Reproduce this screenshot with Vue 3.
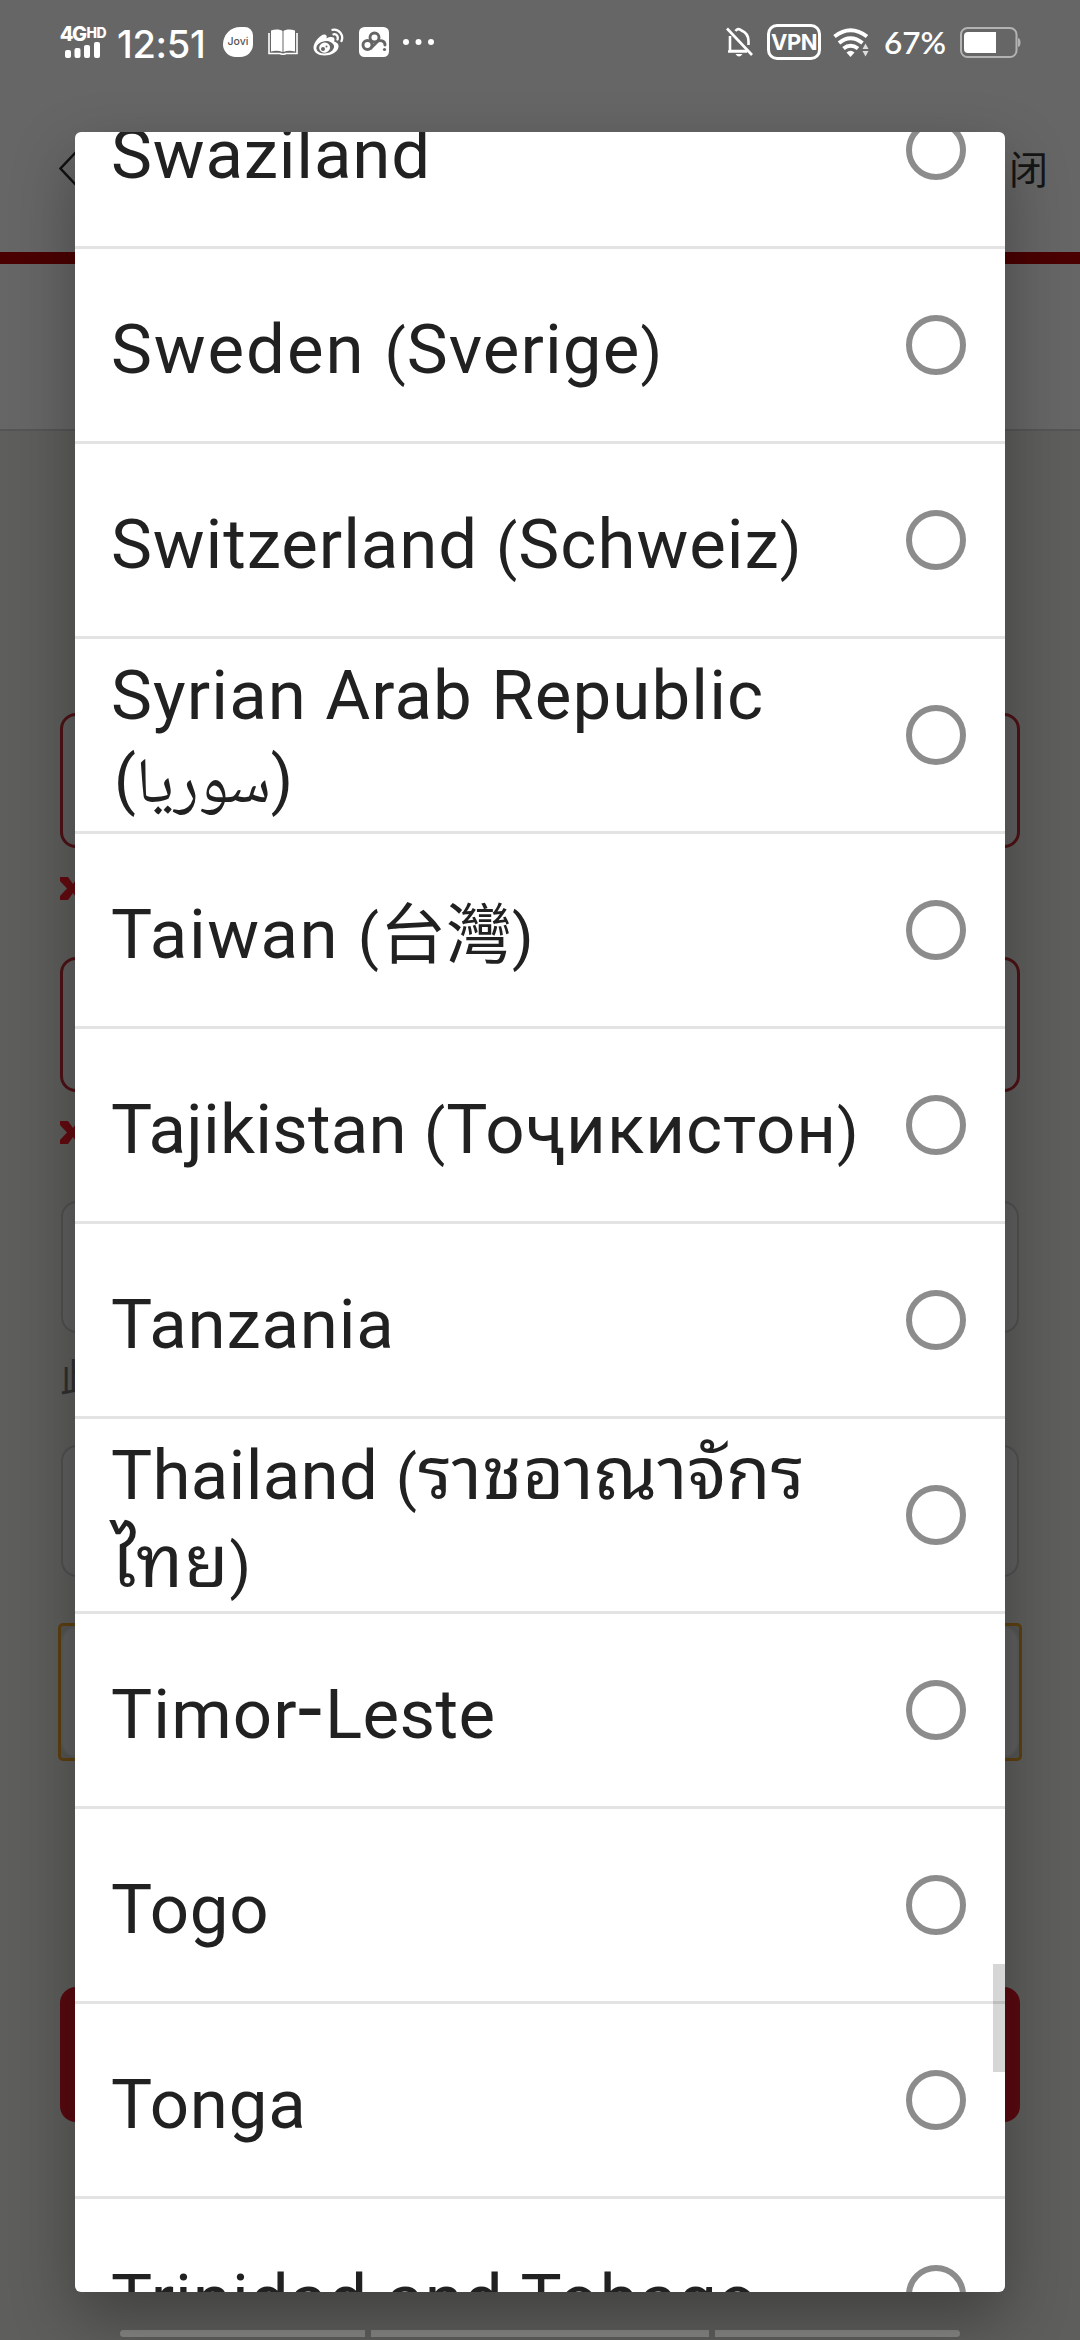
<script setup>
// t: text, s: letter spacing in px, c: class for the script or symbol
const open = { t: '(', s: 1, c: 'paren' }
const close = { t: ')', s: 0, c: 'paren' }
const countries = [
  { lines: [[{ t: 'Swaziland', s: 0.8 }]] },
  { lines: [[{ t: 'Sweden ', s: 1.9 }, open, { t: 'Sverige', s: 1.1 }, close]] },
  { lines: [[{ t: 'Switzerland ', s: 0.9 }, open, { t: 'Schweiz', s: 1 }, close]] },
  { lines: [[{ t: 'Syrian Arab Republic', s: 1.1 }], [{ t: '(سوريا)', s: 0, c: 'arabic' }]] },
  { lines: [[{ t: 'Taiwan ', s: 1.5 }, open, { t: '台灣', s: 0, c: 'han' }, close]] },
  { lines: [[{ t: 'Tajikistan ', s: 0.2 }, open, { t: 'Тоҷикистон', s: 1 }, close]] },
  { lines: [[{ t: 'Tanzania', s: 0.8 }]] },
  { lines: [[{ t: 'Thailand ', s: 0.3 }, open, { t: 'ราชอาณาจักร', s: 0, c: 'thai' }], [{ t: 'ไทย', s: 1, c: 'thai' }, close]] },
  { lines: [[{ t: 'Timor', s: 1.1 }, { t: '-', s: 3, c: 'dash' }, { t: 'Leste', s: 0.4 }]] },
  { lines: [[{ t: 'Togo', s: 0.8 }]] },
  { lines: [[{ t: 'Tonga', s: 0.8 }]] },
  { lines: [[{ t: 'Trinidad and Tobago', s: 1 }]] },
]
</script>

<template>
  <div class="screen">
    <div class="page">
      <header class="status">
        <div class="net">
          <div class="net-type">4G<small>HD</small></div>
          <svg width="36" height="17" viewBox="0 0 36 17" fill="#fff">
            <rect x="0" y="9" width="6" height="8" rx="2" /><rect x="9.5" y="7" width="6" height="10" rx="2" />
            <rect x="19" y="4" width="6" height="13" rx="2" /><rect x="29" y="1" width="6" height="16" rx="2" />
          </svg>
        </div>
        <span class="time">12:51</span>
        <span class="jovi">Jovi</span>
        <svg class="book" width="30" height="26" viewBox="0 0 30 26">
          <path d="M3 1.5C7 0 12 0 14.5 2V23C11 21.5 7 21.5 3 22.5ZM27 1.5C23 0 18 0 15.5 2V23C19 21.5 23 21.5 27 22.5Z" fill="#fff" />
          <path d="M1 4V24.5H12Q15 26 18 24.5H29V4" fill="none" stroke="#fff" stroke-width="1.6" />
        </svg>
        <svg class="weibo" width="31" height="28" viewBox="0 0 31 28">
          <path fill="#fff" d="M12 6.5C14 7 14 9 13.500 10.500C17 8.500 21.500 8.500 21.500 11.500C21.500 12.500 21 13.300 21.500 13.700C24 14.300 26 16 25.500 19C24.500 24.500 18 27.500 11.500 27.500C5 27.500 0.500 24.300 0.500 19.500C0.500 13.500 8.500 5.500 12 6.500Z" />
          <ellipse cx="12.2" cy="19.300" rx="9" ry="6.100" transform="rotate(-8 12.200 19.300)" fill="#666" />
          <ellipse cx="11.600" cy="19.600" rx="5.500" ry="5" transform="rotate(-15 11.600 19.600)" fill="#fff" />
          <circle cx="10" cy="21" r="2" fill="#666" /><circle cx="13.500" cy="18.600" r="1" fill="#666" />
          <path d="M19.500 1.800C26 0.500 31 7 28.500 13M20.500 6.300C23.500 5.600 25.500 8.500 24.500 11.500" fill="none" stroke="#fff" stroke-width="2.300" stroke-linecap="round" />
        </svg>
        <svg class="disk" width="30" height="30" viewBox="0 0 30 30">
          <rect width="30" height="30" rx="5.500" fill="#fff" />
          <g fill="none" stroke="#666" stroke-width="2.900" stroke-linecap="round">
            <circle cx="15.500" cy="10.500" r="4.500" /><circle cx="8.500" cy="18" r="4.500" />
            <path d="M12 21L17.500 15.500C21 12 26 14 26 18" />
          </g>
          <circle cx="25.500" cy="22.500" r="1.600" fill="#666" />
        </svg>
        <svg class="dots" width="32" height="6" viewBox="0 0 32 6" fill="#fff"><circle cx="3" cy="3" r="3" /><circle cx="15.500" cy="3" r="3" /><circle cx="28" cy="3" r="3" /></svg>
        <span class="spacer"></span>
        <svg class="bell" width="27" height="30" viewBox="0 0 27 30" fill="none" stroke="#fff" stroke-width="2.600">
          <path d="M1 1.500L26 28" /><path d="M4 9V24H21M2 24.500H21" /><path d="M9.500 4Q12 0.500 15.500 3.500Q22.500 6.500 22.500 14V18" />
          <path d="M9.500 27H16.500Q13 32 9.500 27Z" fill="#fff" stroke="none" />
        </svg>
        <span class="vpn">VPN</span>
        <svg class="wifi" width="36" height="29" viewBox="0 0 36 29" fill="none" stroke="#fff" stroke-width="4">
          <path d="M1.500 8.500Q17.500 -4 34 8.500" /><path d="M6 15Q17.500 5.500 29.500 15" /><path d="M10.500 20.500Q17.500 15 25 20.500" />
          <path d="M13.500 24.500Q17.500 21 21.500 24.500L17.500 29Z" fill="#fff" stroke="none" />
          <path d="M29.500 21L32.500 15.500L35.500 21ZM29.500 23L32.500 28.500L35.500 23Z" fill="#ddd" stroke="none" />
        </svg>
        <span class="percent">67%</span>
        <svg class="battery" width="61" height="31" viewBox="0 0 61 31">
          <rect x="1" y="1" width="55.500" height="29" rx="6.500" fill="none" stroke="#b3b3b3" stroke-width="2" />
          <path d="M58 11Q60.500 11.500 60.500 15.500T58 20Z" fill="#b3b3b3" />
          <path d="M8 5H36V26H8Q4 26 4 22V9Q4 5 8 5Z" fill="#fff" />
        </svg>
      </header>

      <nav class="titlebar">
        <svg width="36" height="36" viewBox="0 0 36 36" fill="none" stroke="#111" stroke-width="2.500"><path d="M18 1L1.500 18.500L18 36" /></svg>
        <span class="close">关闭</span>
      </nav>
      <div class="stripe"></div>
      <div class="brand"></div>

      <main class="form">
        <div class="field error"></div>
        <div class="hint"><svg width="26" height="25" viewBox="0 0 26 25"><path d="M0 1H8L13 8L18 1H26L18 12.500L26 24H18L13 17L8 24H0V20L7 12.500L0 5Z" fill="#640b10" /></svg></div>
        <div class="field error"></div>
        <div class="hint"><svg width="26" height="25" viewBox="0 0 26 25"><path d="M0 1H8L13 8L18 1H26L18 12.500L26 24H18L13 17L8 24H0V20L7 12.500L0 5Z" fill="#640b10" /></svg></div>
        <div class="field"></div>
        <div class="note">此</div>
        <div class="field"></div>
        <div class="focus-ring"><div class="field"></div></div>
        <div class="submit"></div>
      </main>
      <footer class="gesture"><i></i><i class="mid"></i><i></i></footer>
    </div>

    <div class="dialog">
      <ul class="list">
        <li v-for="(item, i) in countries" :key="i" class="option">
          <div class="label">
            <div v-for="(line, j) in item.lines" :key="j" class="line"><span v-for="(run, k) in line" :key="k" :class="run.c" :style="{ letterSpacing: run.s + 'px' }">{{ run.t }}</span></div>
          </div>
          <span class="radio"></span>
        </li>
      </ul>
      <span class="thumb"></span>
    </div>
  </div>
</template>

<style>
body { margin: 0; overflow: hidden; }
</style>

<style scoped>
.screen { position: relative; width: 1080px; height: 2340px; overflow: hidden; background: #5e5e5c; font-family: Roboto, "Noto Sans CJK SC", sans-serif; }
.page { display: flex; flex-direction: column; height: 2340px; }

.status { display: flex; align-items: center; box-sizing: border-box; height: 84px; padding: 0 59px 0 59px; background: #666; color: #fff; flex: none; }
.net { width: 48px; height: 31px; display: flex; flex-direction: column; align-items: center; margin-right: 10px; }
.net svg { flex: none; margin-top: -1px; }
.net-type { height: 15px; font: 800 20px/15px Inter, sans-serif; letter-spacing: -1.5px; white-space: nowrap; display: flex; align-items: flex-start; }
.net-type small { font-size: 14px; line-height: 11px; letter-spacing: -0.500px; margin-left: 1px; }
.time { width: 96px; margin-right: 10px; padding-top: 3px; font: 500 38px/44px Inter, sans-serif; letter-spacing: -0.300px; white-space: nowrap; }
.jovi { width: 30px; height: 30px; margin-right: 15px; background: #fff; color: #555; border-radius: 68% 32% 50% 50%; font: 500 10.500px/30px Inter, sans-serif; text-align: center; }
.book, .weibo { margin-right: 15px; }
.disk { margin-right: 14px; }
.spacer { flex: 1; }
.bell { margin-right: 14px; }
.vpn { box-sizing: border-box; width: 54px; height: 36px; margin-right: 12px; border: 3px solid #fff; border-radius: 10px; font: 700 22px/31px Inter, sans-serif; letter-spacing: -0.500px; text-align: center; }
.wifi { margin-right: 15px; }
.percent { width: 65px; margin-right: 11px; font: 600 31.500px/36px Lato, sans-serif; white-space: nowrap; }

.titlebar { display: flex; justify-content: space-between; align-items: center; box-sizing: border-box; height: 168px; padding: 0 32px 0 59px; background: #666; color: #151515; flex: none; }
.close { margin-right: -6px; padding-bottom: 2px; font: 39px/50px "Noto Sans CJK SC", sans-serif; letter-spacing: 6px; }
.stripe { height: 12px; background: #4b0000; flex: none; }
.brand { box-sizing: border-box; height: 167px; background: #666; border-bottom: 2px solid #555; flex: none; }

.form { display: flex; flex-direction: column; padding: 282px 60px 0; flex: 1; }
.field { box-sizing: border-box; height: 132px; margin: 0 1px; border: 2px solid #515151; border-radius: 16px; background: #606060; flex: none; }
.field.error { height: 135px; margin: 0; border: 3px solid #4e1216; }
.hint { height: 109px; padding-top: 28px; box-sizing: border-box; flex: none; }
.hint svg { display: block; }
.note { height: 112px; padding-top: 20px; box-sizing: border-box; font: 38px/44px "Noto Sans CJK SC", sans-serif; color: #303030; flex: none; }
.focus-ring { box-sizing: border-box; height: 138px; margin: 46px -2px 0; border: 3px solid #5d4010; border-radius: 5px; background: #555554; flex: none; }
.focus-ring .field { margin: 0; border-color: #5b5b5a; }
.submit { height: 135px; margin-top: 226px; border-radius: 16px; background: #590a10; flex: none; }
.gesture { display: flex; justify-content: space-between; height: 7px; margin: 0 120px 3px; flex: none; }
.gesture i { width: 245px; background: #858683; }
.gesture i.mid { width: 338px; }
.gesture i:first-child { border-radius: 4px 0 0 4px; }
.gesture i:last-child { border-radius: 0 4px 4px 0; }

.dialog { position: absolute; left: 75px; top: 132px; width: 930px; height: 2160px; border-radius: 6px; background: #fff; overflow: hidden; box-shadow: 0 26px 64px rgba(0, 0, 0, 0.32); }
.list { margin: -78px 0 0; padding: 0; list-style: none; }
.option { display: flex; align-items: center; justify-content: space-between; box-sizing: border-box; height: 195px; padding: 0 39px 0 36px; border-bottom: 3px solid #e3e3e3; }
.label { padding-top: 9px; color: #212121; font-size: 69px; }
.line { height: 88px; line-height: 88px; white-space: pre; }
.line span { line-height: 0; }
.paren { font-size: 62px; }
.dash { font-size: 88px; }
.arabic { position: relative; top: -5px; padding-left: 3px; font-family: Roboto, "Noto Naskh Arabic", "DejaVu Sans", sans-serif; font-size: 64px; }
.han { font-family: "Noto Sans CJK TC", sans-serif; font-size: 66px; font-weight: 400; }
.thai { font-family: "Noto Sans Thai Looped", "Noto Looped Thai", Waree, Loma, Garuda, "Noto Sans Thai", "Noto Sans", sans-serif; font-size: 72px; }
.radio { box-sizing: border-box; width: 60px; height: 60px; border: 6px solid #8c8c8c; border-radius: 50%; flex: none; }
.thumb { position: absolute; right: 0; top: 1832px; width: 12px; height: 108px; background: rgba(0, 0, 0, 0.16); }
</style>
